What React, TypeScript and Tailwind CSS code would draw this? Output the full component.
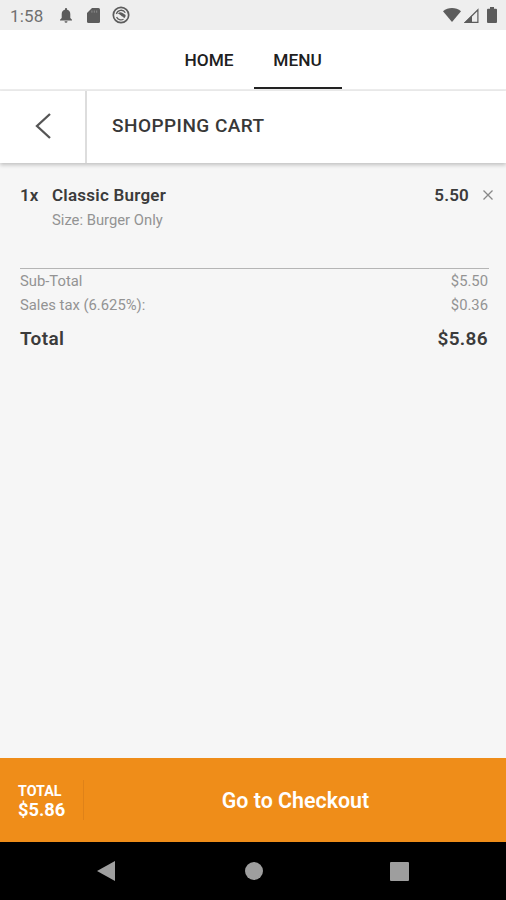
import React from "react";

const items = [{ qty: 1, name: "Classic Burger", option: "Size: Burger Only", price: "5.50" }];

const charges = [
    { label: "Sub-Total", amount: "$5.50" },
    { label: "Sales tax (6.625%):", amount: "$0.36" },
];

const total = "$5.86";

const StatusBar: React.FC = () => (
    <div className="h-[30px] shrink-0 flex items-center justify-between bg-[#eeeeee] pl-2.5 pr-[9px] text-[#5c5c5c]">
        <div className="flex items-center">
            <span className="w-[50px] text-[17px] tracking-[0.2px] leading-none pt-0.5 text-[#707070]">1:58</span>
            <svg className="w-3 h-[15px]" viewBox="0 0 12 15" fill="currentColor">
                <path d="M6 0a1.200 1.200 0 0 0-1.100 1.200v.5C2.800 2.200 1.700 4 1.700 6v4L0 11.700v.8h12v-.8L10.300 10V6c0-2-1.100-3.800-3.200-4.300v-.5A1.100 1.100 0 0 0 6 0zM4.500 13.200a1.500 1.500 0 0 0 3 0z" />
            </svg>
            <svg className="w-[13px] h-[15px] ml-[15px]" viewBox="0 0 13 15" fill="currentColor">
                <path d="M5 0h6.500Q13 0 13 1.500v12q0 1.500-1.500 1.500h-10Q0 15 0 13.500V5z" />
                <path d="M4.900 2.500v2.200M7.300 2.500v2.200M9.700 2.500v2.200" stroke="#8a8a8a" strokeWidth="1" />
            </svg>
            <svg className="w-[18px] h-[18px] ml-3" viewBox="0 0 18 18" fill="none" stroke="currentColor">
                <circle cx="9" cy="9" r="7.700" strokeWidth="1.700" />
                <path d="M4.400 8a4.800 4.800 0 0 1 8.900-1.200M4.600 11a4.800 4.800 0 0 0 6.900 2.200" strokeWidth="1.300" />
                <path d="M5.800 7.300q2.500-2 4.800-.2l3 1.800q.3 2.600-1.600 3.400l-1-1.700q-1.300.2-2-1.100-1.700-1.200-3.200-2.200z" fill="currentColor" stroke="none" />
            </svg>
        </div>
        <div className="flex items-center">
            <svg className="w-[18px] h-[14px]" viewBox="0 0 18 14" fill="currentColor">
                <path d="M9 14L0 3.300C5-1.100 13-1.100 18 3.300z" />
            </svg>
            <svg className="w-[15px] h-[15px] ml-[3px]" viewBox="0 0 15 15">
                <path d="M13.900 1.800v12.500H1.400z" fill="none" stroke="currentColor" strokeWidth="1.200" />
                <path d="M8 7.200V15H0z" fill="currentColor" />
            </svg>
            <svg className="w-2.5 h-4 ml-2" viewBox="0 0 10 16" fill="currentColor">
                <path d="M3 0h4v1.700h2q1 0 1 1V15q0 1-1 1H1q-1 0-1-1V2.700q0-1 1-1h2z" />
            </svg>
        </div>
    </div>
);

const TopNav: React.FC = () => (
    <nav className="h-[61px] shrink-0 flex justify-center border-b-2 border-[#eeeeee] bg-white text-[17.300px] font-medium text-[#202020]">
        <a className="w-[89px] h-[59px] flex items-center justify-center pt-0.5">HOME</a>
        <a className="w-[88px] h-[59px] flex items-center justify-center border-b-2 border-[#222222] pt-1">MENU</a>
    </nav>
);

const CartHeader: React.FC = () => (
    <header className="relative h-[72px] shrink-0 flex bg-white shadow-[0_2px_4px_rgba(0,0,0,0.22)]">
        <button className="w-[87px] flex items-center justify-center pb-0.5 border-r-2 border-[#dddddd]">
            <svg className="w-4 h-[26px]" viewBox="0 0 16 26" fill="none" stroke="#555555" strokeWidth="2.300">
                <path d="M15 1L2 13l13 12" />
            </svg>
        </button>
        <h1 className="flex items-center pl-[25px] pb-0.5 text-[19px] tracking-[0.450px] font-medium text-[#383838]">SHOPPING CART</h1>
    </header>
);

const App: React.FC = () => {
    return (
        <div className="h-screen flex flex-col overflow-hidden bg-[#f6f6f6] font-[Roboto,sans-serif]">
            <StatusBar />
            <TopNav />
            <CartHeader />

            <main className="flex-1 pt-5 pl-5 pr-[17px]">
                {items.map((item) => (
                    <div key={item.name} className="h-[85px] flex -mr-[5px] text-[#3b3b3b]">
                        <span className="w-8 text-[17px] leading-6 font-semibold">{item.qty}x</span>
                        <div className="flex-1">
                            <p className="text-[17px] tracking-[0.230px] leading-6 font-semibold">{item.name}</p>
                            <p className="pt-px text-[14.800px] leading-6 text-[#939393]">{item.option}</p>
                        </div>
                        <span className="text-[17px] tracking-[0.200px] leading-6 font-semibold">{item.price}</span>
                        <svg className="w-2.5 h-2.5 mt-[7px] ml-3.5 mr-px" viewBox="0 0 10 10" stroke="#888888" strokeWidth="1.300">
                            <path d="M0.500 0.500l9 9M9.500 0.500l-9 9" />
                        </svg>
                    </div>
                ))}
                <div className="border-t border-[#b5b5b5]">
                    {charges.map((charge) => (
                        <div key={charge.label} className="flex justify-between pr-px text-[14.800px] leading-6 text-[#939393]">
                            <span>{charge.label}</span>
                            <span>{charge.amount}</span>
                        </div>
                    ))}
                    <div className="flex justify-between mt-2.5 pr-px text-[19px] tracking-[0.350px] leading-6 font-semibold text-[#3b3b3b]">
                        <span>Total</span>
                        <span>{total}</span>
                    </div>
                </div>
            </main>

            <footer className="h-[84px] shrink-0 flex items-center bg-[#ef8d19] text-white">
                <div className="w-[84px] h-10 flex flex-col justify-center pt-0.5 pl-[18px] border-r border-[#df8218] font-bold">
                    <span className="text-[14.300px] leading-[17px]">TOTAL</span>
                    <span className="text-[18.300px] leading-5">{total}</span>
                </div>
                <button className="flex-1 pt-0.5 pl-px text-center text-[21.400px] font-semibold">Go to Checkout</button>
            </footer>

            <div className="h-[58px] shrink-0 flex items-center justify-center bg-black">
                <svg className="w-[18px] h-5" viewBox="0 0 18 20" fill="#9e9e9e">
                    <path d="M18 0v20L0 10z" />
                </svg>
                <div className="w-[18px] h-[18px] ml-[130px] rounded-full bg-[#9e9e9e]" />
                <div className="w-[19px] h-[19px] ml-[127px] rounded-[1px] bg-[#9e9e9e]" />
            </div>
        </div>
    );
};

export default App;
